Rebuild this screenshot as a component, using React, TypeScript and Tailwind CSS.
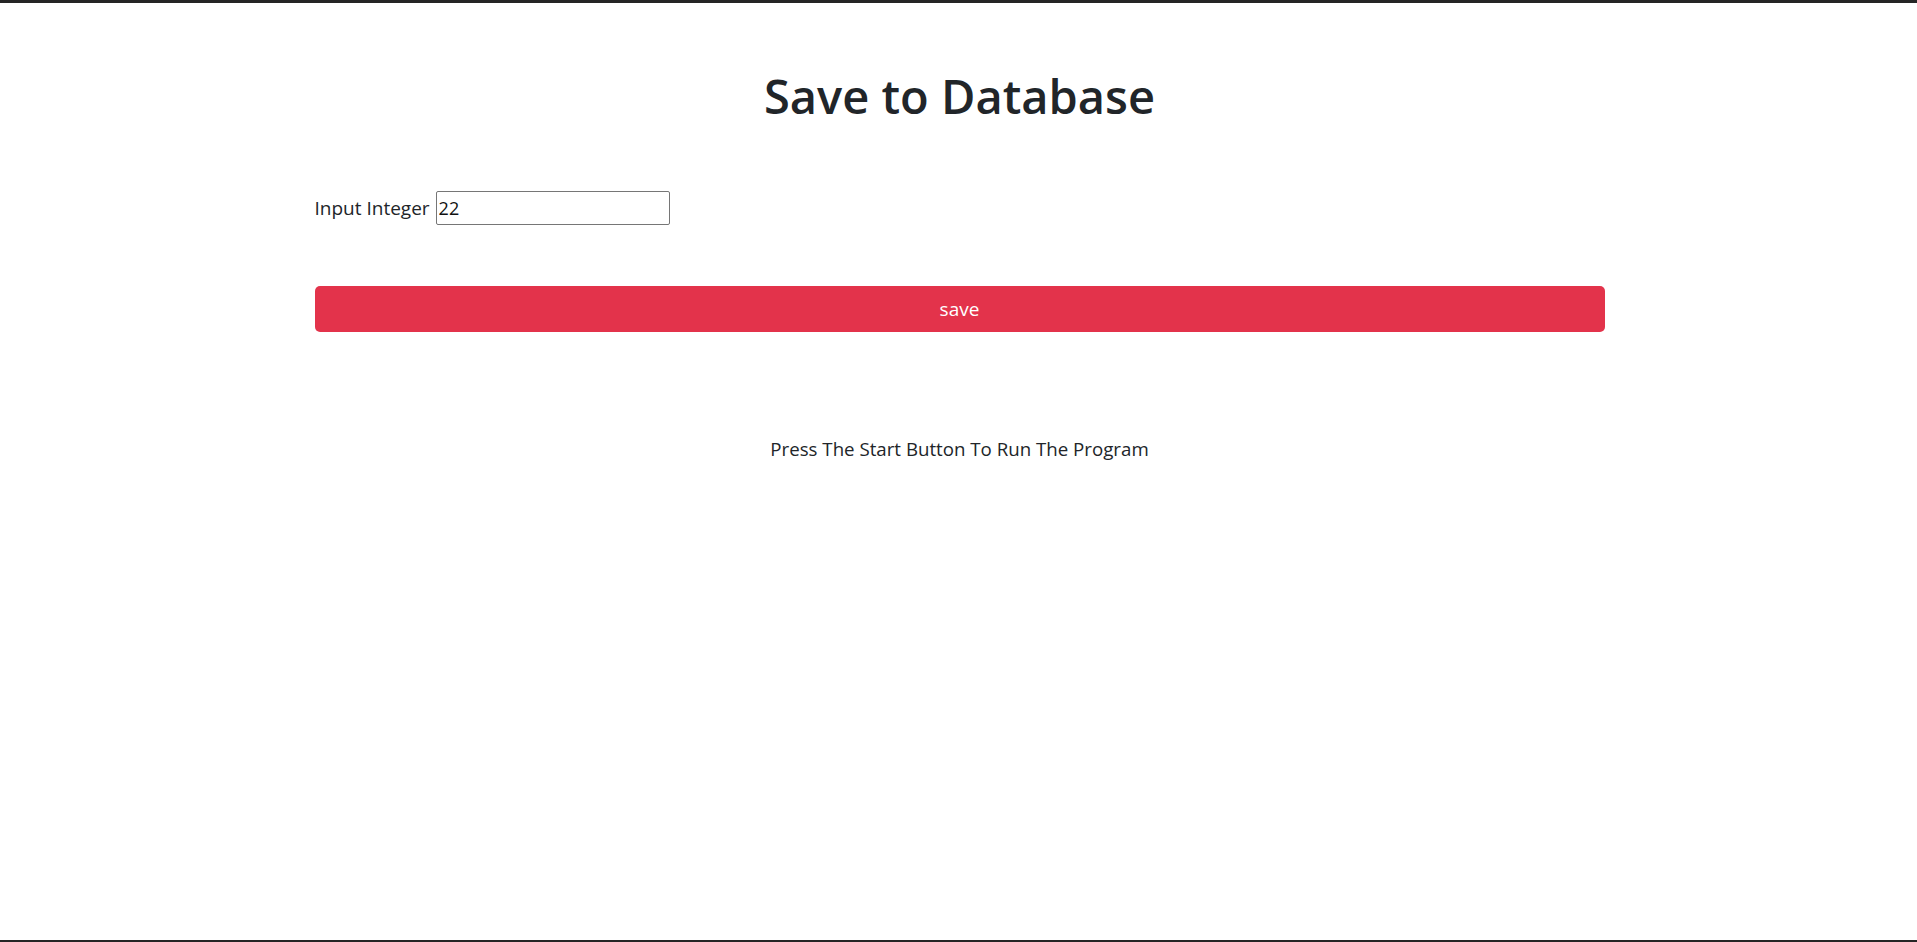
import React from "react";

export default function App() {
  return (
    <div
      className="h-[942px] w-full bg-white border-t-[3px] border-b-[2px] border-[#252525] text-[#212529] overflow-hidden"
      style={{ fontFamily: '"Open Sans", "Noto Sans", sans-serif' }}
    >
      <div className="mx-auto w-[1290px] translate-x-[1px] flex flex-col">
        <h1 className="mt-[64px] text-center text-[47px] leading-[58px] font-semibold">
          Save to Database
        </h1>
        <div className="mt-[66px] flex items-center gap-[6px]">
          <label className="text-[19px] leading-[26px]">Input Integer</label>
          <input
            type="text"
            defaultValue="22"
            className="w-[234px] h-[34px] border border-[#767676] rounded-[2px] px-[2px] text-[18px] text-[#111] outline-none"
            style={{ fontFamily: '"Open Sans", "Noto Sans", sans-serif' }}
          />
        </div>
        <button className="mt-[61px] h-[46px] w-full rounded-[5px] bg-[#e3334b] text-white text-[19px]">
          save
        </button>
        <p className="mt-[103px] text-center text-[18.7px] leading-[28px]">
          Press The Start Button To Run The Program
        </p>
      </div>
    </div>
  );
}
